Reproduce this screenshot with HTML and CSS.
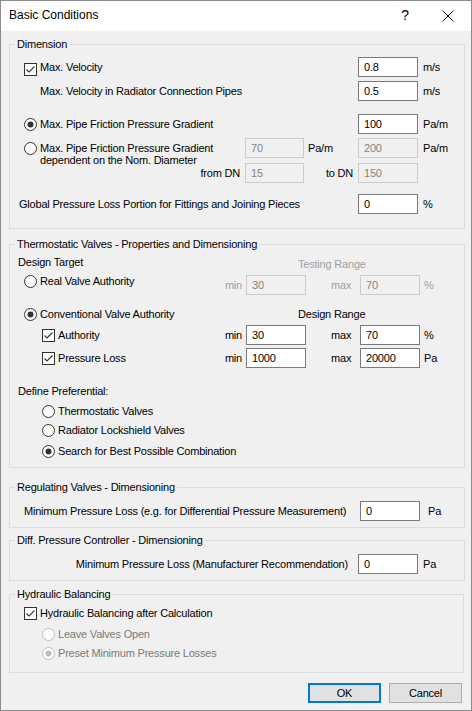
FILE: index.html
```html
<!DOCTYPE html>
<html lang="en">
<head>
<meta charset="utf-8">
<title>Basic Conditions</title>
<link rel="stylesheet" href="styles.css">
</head>
<body>
<div class="window">
  <header class="titlebar">
    <span class="title">Basic Conditions</span>
    <span class="help">?</span>
    <svg class="close" width="12" height="12" viewBox="0 0 12 12"><path d="M0.5 0.5L11.5 11.5M11.5 0.5L0.5 11.5" stroke="#000" stroke-width="1" fill="none"/></svg>
  </header>
  <main class="content">
    <fieldset class="group g-dim">
      <legend>Dimension</legend>
      <div class="row r-vel">
        <div class="lead">
          <span class="cb cb-low"><svg width="11" height="11" viewBox="0 0 11 11"><polyline points="1.5,5.5 4,8 9.5,2.5" fill="none" stroke="#333" stroke-width="1.1"/></svg></span>
          <span>Max. Velocity</span>
        </div>
        <span class="field">0.8</span><span class="unit">m/s</span>
      </div>
      <div class="row r-rad">
        <div class="lead lead-indent"><span>Max. Velocity in Radiator Connection Pipes</span></div>
        <span class="field">0.5</span><span class="unit">m/s</span>
      </div>
      <div class="row r-grad">
        <div class="lead">
          <svg class="rb" width="13" height="13" viewBox="0 0 13 13"><circle cx="6.5" cy="6.5" r="6" fill="#fff" stroke="#333"/><circle cx="6.5" cy="6.5" r="3" fill="#333"/></svg>
          <span>Max. Pipe Friction Pressure Gradient</span>
        </div>
        <span class="field">100</span><span class="unit">Pa/m</span>
      </div>
      <div class="pair">
        <div class="pair-opt">
          <svg class="rb" width="13" height="13" viewBox="0 0 13 13"><circle cx="6.5" cy="6.5" r="6" fill="#fff" stroke="#333"/></svg>
          <span class="two-line">Max. Pipe Friction Pressure Gradient<br>dependent on the Nom. Diameter</span>
        </div>
        <span class="field off c2">70</span>
        <span class="pair-unit">Pa/m</span>
        <span class="field off c4">200</span>
        <span class="unit">Pa/m</span>
        <span class="from">from DN</span>
        <span class="field off c2 r2">15</span>
        <span class="to">to DN</span>
        <span class="field off c4 r2">150</span>
      </div>
      <div class="row r-global">
        <div class="lead lead-global"><span>Global Pressure Loss Portion for Fittings and Joining Pieces</span></div>
        <span class="field">0</span><span class="unit">%</span>
      </div>
    </fieldset>

    <fieldset class="group g-th">
      <legend>Thermostatic Valves - Properties and Dimensioning</legend>
      <div class="hdr">
        <span class="hdr-left">Design Target</span>
        <span class="gray hdr-range">Testing Range</span>
      </div>
      <div class="row r-real">
        <div class="opt opt-top">
          <svg class="rb" width="13" height="13" viewBox="0 0 13 13"><circle cx="6.5" cy="6.5" r="6" fill="#fff" stroke="#333"/></svg>
          <span>Real Valve Authority</span>
        </div>
        <span class="min gray">min</span>
        <span class="field off">30</span>
        <span class="max gray">max</span>
        <span class="field off">70</span>
        <span class="unit-t gray">%</span>
      </div>
      <div class="row-line r-conv">
        <div class="opt opt-wide">
          <svg class="rb" width="13" height="13" viewBox="0 0 13 13"><circle cx="6.5" cy="6.5" r="6" fill="#fff" stroke="#333"/><circle cx="6.5" cy="6.5" r="3" fill="#333"/></svg>
          <span>Conventional Valve Authority</span>
        </div>
        <span>Design Range</span>
      </div>
      <div class="row sub r-auth">
        <div class="opt opt-sub">
          <span class="cb"><svg width="11" height="11" viewBox="0 0 11 11"><polyline points="1.5,5.5 4,8 9.5,2.5" fill="none" stroke="#333" stroke-width="1.1"/></svg></span>
          <span>Authority</span>
        </div>
        <span class="min">min</span>
        <span class="field">30</span>
        <span class="max">max</span>
        <span class="field">70</span>
        <span class="unit-t">%</span>
      </div>
      <div class="row sub r-loss">
        <div class="opt opt-sub">
          <span class="cb"><svg width="11" height="11" viewBox="0 0 11 11"><polyline points="1.5,5.5 4,8 9.5,2.5" fill="none" stroke="#333" stroke-width="1.1"/></svg></span>
          <span>Pressure Loss</span>
        </div>
        <span class="min">min</span>
        <span class="field">1000</span>
        <span class="max">max</span>
        <span class="field">20000</span>
        <span class="unit-t">Pa</span>
      </div>
      <div class="define">Define Preferential:</div>
      <div class="choice ch-1">
        <svg class="rb" width="13" height="13" viewBox="0 0 13 13"><circle cx="6.5" cy="6.5" r="6" fill="#fff" stroke="#333"/></svg>
        <span>Thermostatic Valves</span>
      </div>
      <div class="choice ch-2">
        <svg class="rb" width="13" height="13" viewBox="0 0 13 13"><circle cx="6.5" cy="6.5" r="6" fill="#fff" stroke="#333"/></svg>
        <span>Radiator Lockshield Valves</span>
      </div>
      <div class="choice ch-3">
        <svg class="rb" width="13" height="13" viewBox="0 0 13 13"><circle cx="6.5" cy="6.5" r="6" fill="#fff" stroke="#333"/><circle cx="6.5" cy="6.5" r="3" fill="#333"/></svg>
        <span>Search for Best Possible Combination</span>
      </div>
    </fieldset>

    <fieldset class="group g-reg">
      <legend>Regulating Valves - Dimensioning</legend>
      <div class="row r-reg">
        <div class="lead lead-reg"><span>Minimum Pressure Loss (e.g. for Differential Pressure Measurement)</span></div>
        <span class="field">0</span><span class="unit unit-reg">Pa</span>
      </div>
    </fieldset>

    <fieldset class="group g-diff">
      <legend>Diff. Pressure Controller - Dimensioning</legend>
      <div class="row r-diff">
        <div class="lead lead-diff"><span>Minimum Pressure Loss (Manufacturer Recommendation)</span></div>
        <span class="field">0</span><span class="unit">Pa</span>
      </div>
    </fieldset>

    <fieldset class="group g-hyd">
      <legend>Hydraulic Balancing</legend>
      <div class="choice top-choice h-1">
        <span class="cb"><svg width="11" height="11" viewBox="0 0 11 11"><polyline points="1.5,5.5 4,8 9.5,2.5" fill="none" stroke="#333" stroke-width="1.1"/></svg></span>
        <span>Hydraulic Balancing after Calculation</span>
      </div>
      <div class="choice disabled h-2">
        <svg class="rb" width="13" height="13" viewBox="0 0 13 13"><circle cx="6.5" cy="6.5" r="6" fill="#fff" stroke="#bcbcbc"/></svg>
        <span>Leave Valves Open</span>
      </div>
      <div class="choice disabled h-3">
        <svg class="rb" width="13" height="13" viewBox="0 0 13 13"><circle cx="6.5" cy="6.5" r="6" fill="#fff" stroke="#bcbcbc"/><circle cx="6.5" cy="6.5" r="3" fill="#bcbcbc"/></svg>
        <span>Preset Minimum Pressure Losses</span>
      </div>
    </fieldset>

    <div class="buttons">
      <span class="btn btn-default">OK</span>
      <span class="btn">Cancel</span>
    </div>
  </main>
</div>
</body>
</html>
```

FILE: styles.css
```css
html, body {
  margin: 0;
  padding: 0;
  background: #ffffff;
}

body {
  font-family: "Liberation Sans", Arial, sans-serif;
  font-size: 11px;
  line-height: 13px;
  letter-spacing: -0.2px;
  color: #000;
}

.window {
  width: 472px;
  height: 711px;
  box-sizing: border-box;
  border: 1px solid #8c8c8c;
  background: #f0f0f0;
  display: flex;
  flex-direction: column;
}

/* title bar */
.titlebar {
  flex: none;
  height: 30px;
  background: #ffffff;
  display: flex;
  align-items: center;
}

.title {
  font-size: 12px;
  letter-spacing: 0;
  margin-left: 8px;
  margin-top: -1px;
}

.help {
  margin-left: auto;
  font-size: 14px;
  letter-spacing: 0;
  margin-right: 33px;
  margin-top: -1px;
}

.close {
  margin-right: 17px;
  margin-top: 0;
}

.content {
  flex: 1;
  display: flex;
  flex-direction: column;
}

/* group boxes */
.group {
  margin: 0 0 0 8px;
  padding: 0;
  width: 456px;
  box-sizing: border-box;
  border: 1px solid #dcdcdc;
  min-width: 0;
}

.group legend {
  margin-left: 5px;
  padding: 0 2px;
  height: 13px;
  line-height: 13px;
}

.g-dim { margin-top: 7px; padding-bottom: 14px; }
.g-th { margin-top: 9px; padding-bottom: 9px; }
.g-reg { margin-top: 13px; padding-bottom: 6px; }
.g-diff { margin-top: 6px; padding-bottom: 6px; }
.g-hyd { margin-top: 7px; padding-bottom: 12px; width: 455px; }

/* controls */
.cb {
  flex: none;
  width: 13px;
  height: 13px;
  box-sizing: border-box;
  border: 1px solid #333;
  background: #fff;
  display: block;
}

.cb svg { display: block; }

.cb-low { margin-top: 5px; }

.rb {
  flex: none;
  display: block;
}

.field {
  flex: none;
  width: 60px;
  height: 20px;
  box-sizing: border-box;
  border: 1px solid #7a7a7a;
  background: #fff;
  padding-left: 5px;
  display: flex;
  align-items: center;
}

.field.off {
  border-color: #cccccc;
  background: #f0f0f0;
  color: #838383;
}

.gray { color: #a0a0a0; }

.unit { padding-left: 5px; }

/* generic rows */
.row {
  display: flex;
  align-items: center;
  height: 20px;
  padding-left: 14px;
}

.lead {
  width: 334px;
  box-sizing: border-box;
  display: flex;
  align-items: center;
  gap: 3px;
}

.lead-indent { padding-left: 16px; }

.r-vel { margin-top: 6px; }
.r-rad { margin-top: 4px; }
.r-grad { margin-top: 13px; }

/* two-row gradient block */
.pair {
  display: grid;
  grid-template-columns: 221px 59px 54px 60px auto;
  grid-template-rows: 20px 20px;
  row-gap: 5px;
  padding-left: 14px;
  margin-top: 4px;
}

.pair-opt {
  grid-column: 1;
  grid-row: 1 / span 2;
  display: flex;
  align-items: flex-start;
  gap: 3px;
  padding-top: 4px;
}

.two-line { line-height: 12px; }

.pair .c2 { grid-column: 2; grid-row: 1; width: 59px; }
.pair .c4 { grid-column: 4; grid-row: 1; }
.pair .r2 { grid-row: 2; }

.pair-unit {
  grid-column: 3;
  grid-row: 1;
  align-self: center;
  padding-left: 4px;
}

.pair .unit {
  grid-column: 5;
  grid-row: 1;
  align-self: center;
}

.from {
  grid-column: 1;
  grid-row: 2;
  align-self: center;
  justify-self: end;
  padding-right: 5px;
}

.to {
  grid-column: 3;
  grid-row: 2;
  align-self: center;
  justify-self: end;
  padding-right: 5px;
}

.r-global { margin-top: 11px; padding-left: 9px; }
.lead-global { width: 339px; }

/* thermostatic */
.hdr {
  display: flex;
  align-items: flex-start;
  margin-top: 4px;
  padding-left: 8px;
  height: 14px;
  line-height: 14px;
}

.hdr-left { width: 280px; }
.hdr-range { margin-top: 2px; }

.opt {
  flex: none;
  display: flex;
  align-items: center;
  gap: 3px;
  box-sizing: border-box;
}

.opt-top {
  width: 197px;
  align-self: flex-start;
  height: 13px;
}

.r-real { margin-top: 6px; }

.min {
  width: 25px;
  box-sizing: border-box;
  text-align: right;
  padding-right: 4px;
}

.max {
  width: 54px;
  box-sizing: border-box;
  padding-left: 25px;
}

.unit-t { padding-left: 4px; }

.row-line {
  display: flex;
  align-items: center;
  height: 13px;
  padding-left: 14px;
}

.r-conv { margin-top: 13px; }
.opt-wide { width: 274px; }

.row.sub { padding-left: 32px; }
.opt-sub { width: 179px; }
.r-auth { margin-top: 4px; }
.r-loss { margin-top: 3px; }

.define {
  margin-top: 16px;
  padding-left: 8px;
  height: 14px;
  line-height: 14px;
}

.choice {
  display: flex;
  align-items: center;
  gap: 3px;
  height: 14px;
  padding-left: 32px;
}

.ch-1 { margin-top: 6px; }
.ch-2 { margin-top: 5px; }
.ch-3 { margin-top: 7px; }

/* regulating / diff */
.r-reg { margin-top: 7px; }
.lead-reg { width: 336px; }
.unit-reg { padding-left: 8px; }

.r-diff { margin-top: 7px; padding-left: 0; }
.lead-diff {
  width: 348px;
  justify-content: flex-end;
  padding-right: 10px;
}

/* hydraulic */
.top-choice { padding-left: 14px; }
.h-1 { margin-top: 5px; }
.h-2 { margin-top: 7px; }
.h-3 { margin-top: 5px; }
.choice.disabled { color: #7a7a7a; }

/* buttons */
.buttons {
  display: flex;
  justify-content: flex-end;
  gap: 8px;
  margin-top: 10px;
  padding-right: 9px;
}

.btn {
  width: 73px;
  height: 20px;
  box-sizing: border-box;
  background: #e1e1e1;
  border: 1px solid #adadad;
  display: flex;
  align-items: center;
  justify-content: center;
}

.btn-default { border: 2px solid #0078d7; }
```
